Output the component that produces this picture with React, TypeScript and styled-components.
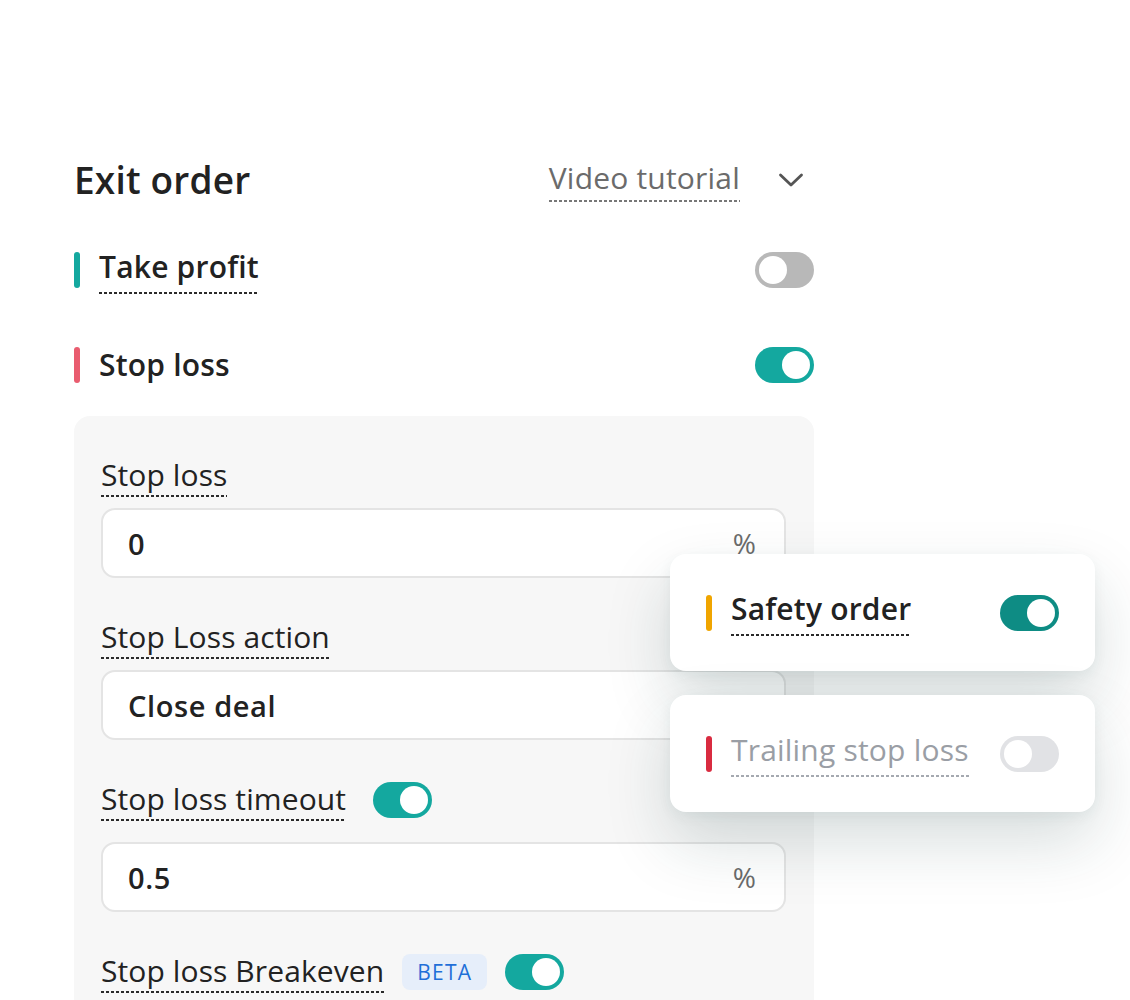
import { FunctionComponent, ReactNode } from "react";
import styled, { createGlobalStyle } from "styled-components";

const GlobalStyle = createGlobalStyle`
  body {
    margin: 0;
    background: #fff;
    font-family: "Open Sans", "Noto Sans", sans-serif;
    color: #222;
  }
`;

const Page = styled.div`
  position: relative;
  width: 740px;
  padding: 160px 0 0 74px;
  height: 840px;
  overflow: hidden;
`;

const Header = styled.div`
  display: flex;
  justify-content: space-between;
  align-items: center;
  height: 40px;
  padding-right: 10px;
`;

const Title = styled.h2`
  margin: 0;
  font-size: 37px;
  font-weight: 600;
  letter-spacing: 0.2px;
  line-height: 40px;
`;

const TutorialLink = styled.div`
  display: flex;
  align-items: center;
  gap: 38px;
`;

const Dotted = styled.span<{ color?: string }>`
  display: inline-block;
  line-height: 40px;
  padding-bottom: 2px;
  background-image: linear-gradient(
    to right,
    ${({ color }) => color || "#2a2a2a"} 60%,
    transparent 60%
  );
  background-size: 5px 1.6px;
  background-repeat: repeat-x;
  background-position: left bottom;
`;

const TutorialText = styled(Dotted)`
  font-size: 30px;
  color: #6b6b6b;
  letter-spacing: 0.2px;
  padding-bottom: 4px;
`;

const Row = styled.div<{ $top: number }>`
  display: flex;
  align-items: center;
  justify-content: space-between;
  height: 36px;
  margin-top: ${({ $top }) => $top}px;
`;

const RowLabel = styled.div`
  display: flex;
  align-items: center;
  gap: 19px;
`;

const Marker = styled.span<{ color: string }>`
  width: 6px;
  height: 36px;
  border-radius: 3px;
  background: ${({ color }) => color};
`;

const RowText = styled.span<{ $muted?: boolean }>`
  font-size: 30px;
  font-weight: ${({ $muted }) => ($muted ? 400 : 600)};
  color: ${({ $muted }) => ($muted ? "#9a9ea5" : "#222")};
  letter-spacing: 0.2px;
  line-height: 40px;
`;

const Track = styled.span<{ $on: boolean; $color: string }>`
  position: relative;
  display: inline-block;
  flex-shrink: 0;
  width: 59px;
  height: 36px;
  border-radius: 18px;
  background: ${({ $color }) => $color};
`;

const Knob = styled.span<{ $on: boolean }>`
  position: absolute;
  top: 4px;
  left: ${({ $on }) => ($on ? "27px" : "4px")};
  width: 28px;
  height: 28px;
  border-radius: 50%;
  background: #fff;
`;

const Toggle: FunctionComponent<{ on?: boolean; color?: string }> = ({
  on = false,
  color,
}) => (
  <Track $on={on} $color={color || (on ? "#14a89f" : "#b8b8b8")}>
    <Knob $on={on} />
  </Track>
);

const Panel = styled.div`
  margin-top: 33px;
  background: #f7f7f7;
  border-radius: 16px 16px 0 0;
  padding: 40px 28px 40px 27px;
  display: flex;
  flex-direction: column;
  gap: 40px;
`;

const Field = styled.div<{ $gap?: number }>`
  display: flex;
  flex-direction: column;
  gap: ${({ $gap }) => $gap ?? 12}px;
`;

const FieldHead = styled.div<{ $gap?: number }>`
  display: flex;
  align-items: center;
  height: 40px;
  gap: ${({ $gap }) => $gap ?? 27}px;
`;

const FieldLabel = styled(Dotted)`
  font-size: 30px;
  font-weight: 400;
  color: #222;
  letter-spacing: 0.1px;
`;

const InputBox = styled.div`
  display: flex;
  align-items: center;
  justify-content: space-between;
  height: 66px;
  padding: 0 28px 0 25px;
  background: #fff;
  border: 2px solid #e4e4e4;
  border-radius: 14px;
`;

const Value = styled.span`
  font-size: 29px;
  font-weight: 600;
  color: #222;
  letter-spacing: 0.6px;
`;

const Unit = styled.span`
  font-size: 28px;
  color: #6b6b6b;
`;

const Badge = styled.span`
  display: inline-flex;
  align-items: center;
  justify-content: center;
  width: 85px;
  height: 36px;
  border-radius: 8px;
  background: #e6eefa;
  color: #1f6fd8;
  font-size: 21px;
  letter-spacing: 1.2px;
`;

const CardStack = styled.div`
  position: absolute;
  left: 670px;
  top: 554px;
  display: flex;
  flex-direction: column;
  gap: 24px;
`;

const Card = styled.div`
  display: flex;
  align-items: center;
  justify-content: space-between;
  width: 425px;
  height: 117px;
  box-sizing: border-box;
  padding: 0 36px;
  background: #fff;
  border-radius: 16px;
  box-shadow: 0 30px 64px rgba(25, 60, 60, 0.17), 0 4px 14px rgba(25, 60, 60, 0.06);
`;

const Chevron = () => (
  <svg width="26" height="16" viewBox="0 0 26 16" fill="none">
    <path
      d="M2.5 3 L13 13 L23.5 3"
      stroke="#555"
      strokeWidth="2.8"
      strokeLinecap="round"
      strokeLinejoin="round"
    />
  </svg>
);

const InputField: FunctionComponent<{
  label: ReactNode;
  value: string;
  unit?: string;
  gap?: number;
}> = ({ label, value, unit, gap }) => (
  <Field $gap={gap}>
    <FieldHead>{label}</FieldHead>
    <InputBox>
      <Value>{value}</Value>
      {unit && <Unit>{unit}</Unit>}
    </InputBox>
  </Field>
);

const App: FunctionComponent = () => {
  return (
    <>
      <GlobalStyle />
      <Page>
        <Header>
          <Title>Exit order</Title>
          <TutorialLink>
            <TutorialText color="#777">Video tutorial</TutorialText>
            <Chevron />
          </TutorialLink>
        </Header>

        <Row $top={52}>
          <RowLabel>
            <Marker color="#14a89f" />
            <Dotted>
              <RowText>Take profit</RowText>
            </Dotted>
          </RowLabel>
          <Toggle />
        </Row>

        <Row $top={59}>
          <RowLabel>
            <Marker color="#e95c6f" />
            <RowText>Stop loss</RowText>
          </RowLabel>
          <Toggle on />
        </Row>

        <Panel>
          <InputField
            label={<FieldLabel>Stop loss</FieldLabel>}
            value="0"
            unit="%"
          />
          <InputField
            label={<FieldLabel>Stop Loss action</FieldLabel>}
            value="Close deal"
          />
          <InputField
            gap={22}
            label={
              <>
                <FieldLabel>Stop loss timeout</FieldLabel>
                <Toggle on />
              </>
            }
            value="0.5"
            unit="%"
          />
          <Field>
            <FieldHead $gap={18}>
              <FieldLabel>Stop loss Breakeven</FieldLabel>
              <Badge>BETA</Badge>
              <Toggle on />
            </FieldHead>
          </Field>
        </Panel>
      </Page>

      <CardStack>
        <Card>
          <RowLabel>
            <Marker color="#f0a500" />
            <Dotted>
              <RowText>Safety order</RowText>
            </Dotted>
          </RowLabel>
          <Toggle on color="#0e8c84" />
        </Card>
        <Card>
          <RowLabel>
            <Marker color="#d92b40" />
            <Dotted color="#a5a9b0">
              <RowText $muted>Trailing stop loss</RowText>
            </Dotted>
          </RowLabel>
          <Toggle color="#e1e2e5" />
        </Card>
      </CardStack>
    </>
  );
};

export default App;
